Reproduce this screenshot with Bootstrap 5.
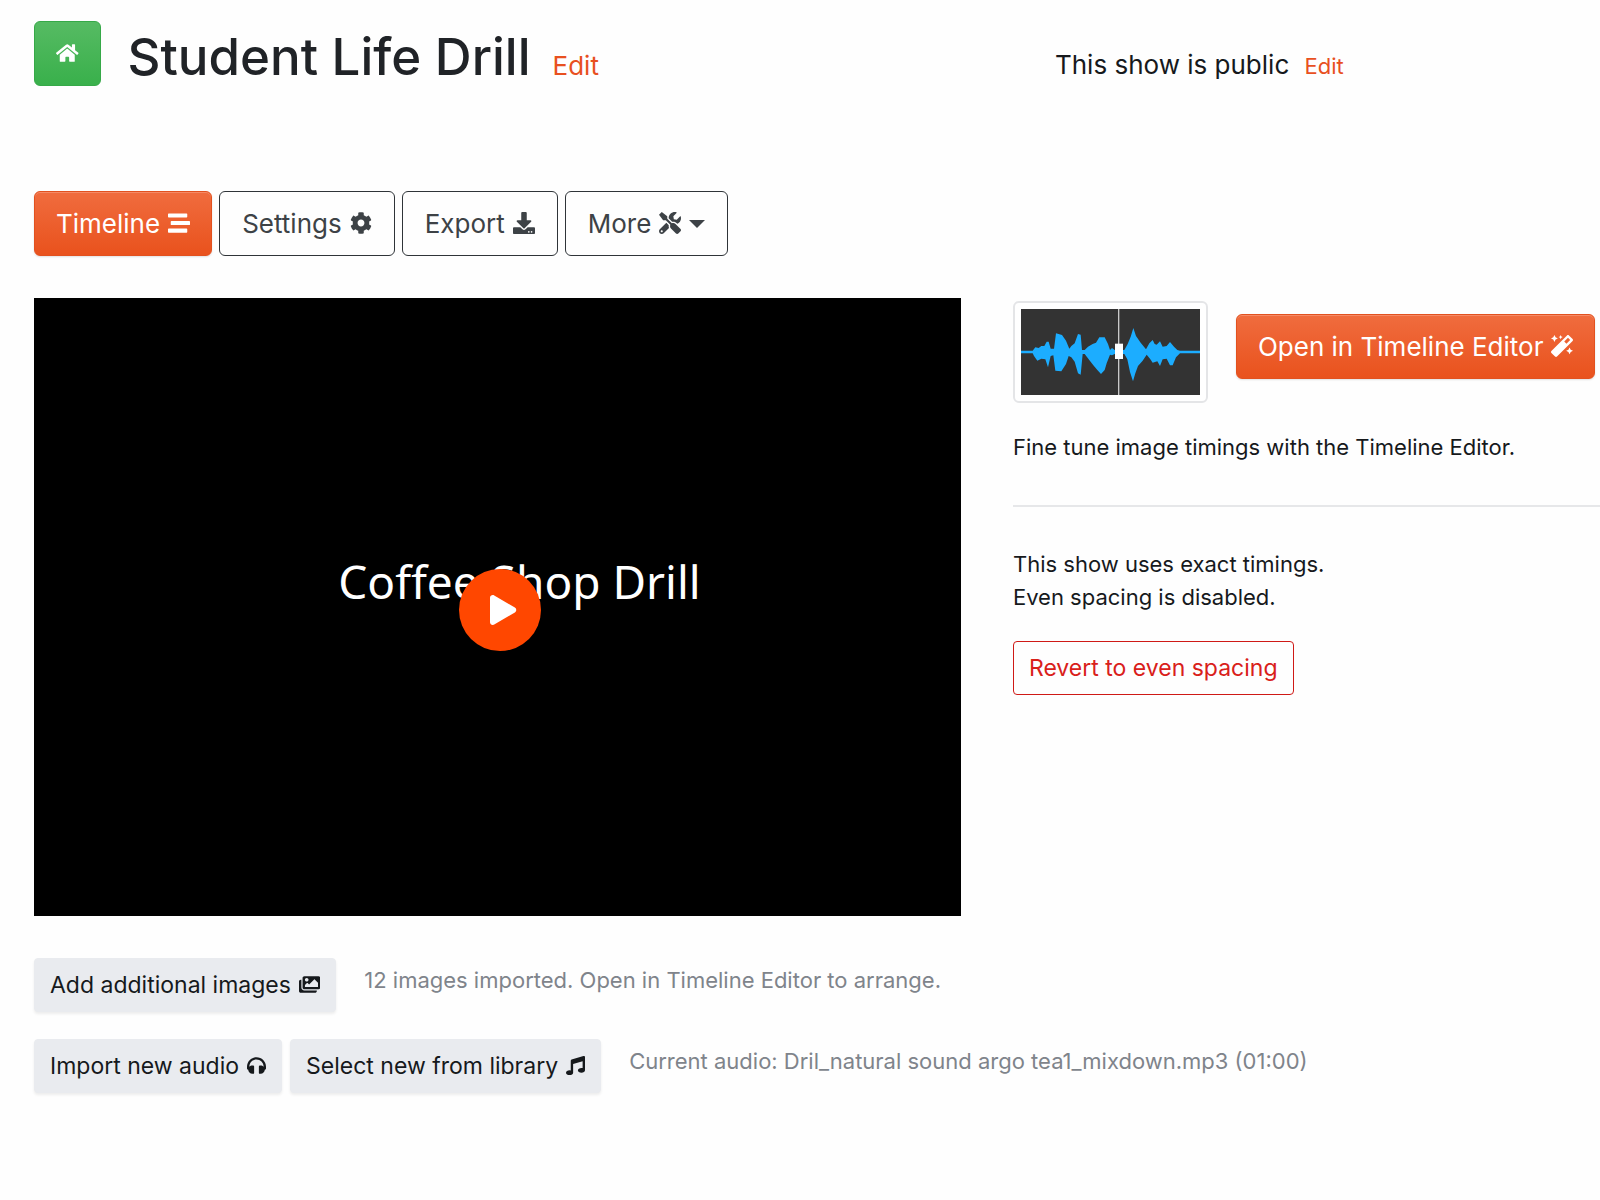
<!DOCTYPE html>
<html lang="en">
<head>
<meta charset="utf-8">
<meta name="viewport" content="width=device-width, initial-scale=1">
<title>Student Life Drill</title>
<link rel="stylesheet" href="https://cdn.jsdelivr.net/npm/bootstrap@5.3.0/dist/css/bootstrap.min.css">
<style>
  body { font-family: Inter, "Liberation Sans", sans-serif; font-size: 22px; line-height: 33px; color: #16191c; background: #fefefe; }
  a { color: #e8501f; text-decoration: none; }
  .ico { height: 22px; width: auto; fill: currentColor; flex: none; }
  .page { padding: 21px 0 40px 34px; }
  .split { display: grid; grid-template-columns: minmax(0, 30fr) minmax(0, 19fr); column-gap: 52px; }
  .btn { white-space: nowrap; display: inline-flex; align-items: center; }
  .btn-big { font-size: 26px; line-height: 39px; padding: 12px 21px; border-radius: 6px; gap: 8px; min-height: 65px; }
  .btn-big .ico { margin-bottom: 2px; }
  .btn-small { font-size: 23px; line-height: 36px; padding: 8px 15px; border-radius: 4px; gap: 8px; }
  .btn-small .ico { height: 19px; }
  .btn-fire, .btn-fire:hover { color: #fff; border-color: #e2511f; background: linear-gradient(#f06c3e, #e9521d); box-shadow: inset 0 1px 0 #f58a66, 0 1px 2px rgba(0,0,0,.12); }
  .btn-line, .btn-line:hover { color: #3d4246; border-color: #2f3438; padding: 12px 22px; }
  .btn-home, .btn-home:hover { color: #fff; border-color: #36a948; background: linear-gradient(#56bb63, #39b04b); }
  .btn-home .ico { height: 20px; }
  .btn-soft, .btn-soft:hover { color: #16191c; border-color: #e9ebef; background: #e9ebef; box-shadow: 0 2px 3px rgba(0,0,0,.07); }
  .btn-revert, .btn-revert:hover { color: #d9201a; border-color: #cf1a16; }
  .show-title { font-size: 51px; line-height: 65px; font-weight: 500; color: #202327; }
  .title-group { padding: 3px 0 0 27px; gap: 22px; }
  .title-edit { font-size: 26px; }
  .visibility { font-size: 26px; padding: 27px 0 0 42px; }
  .visibility a { font-size: 22px; margin-left: 8px; }
  .toolbar { margin-top: 102px; gap: 7px; }
  .toolbar .dropdown-toggle::after { margin-left: 0; border-top-width: 8px; border-left-width: 8px; border-right-width: 8px; }
  .workspace { margin-top: 42px; }
  .player { aspect-ratio: 3 / 2; background: #000; color: #fff; }
  .slide-text { font-family: "Noto Sans", sans-serif; font-size: 46px; line-height: 64px; padding: 0 0 52px 44px; }
  .play-btn { width: 82px; height: 82px; background: #ff4700; color: #fff; top: 50%; left: 50%; margin: 3px 0 0 3px; }
  .play-btn .ico { height: 30px; margin-left: 6px; }
  .wave { padding: 6px; border: 2px solid #e4e5e7; border-radius: 6px; background: #fff; width: 195px; }
  .wave svg { display: block; width: 100%; }
  .side { padding-top: 3px; }
  .open-editor { margin: 13px 0 0 28px; }
  .rule { height: 2px; background: #e6e7e9; margin: 41px 0; }
  .after-note { margin-bottom: 27px; }
  .media-row { margin-bottom: 27px; }
  .hint { color: #7f848b; padding: 6px 0 0 28px; }
</style>
</head>
<body>
<div class="page">
  <header class="split align-items-start">
    <div class="d-flex align-items-start">
      <a class="btn btn-home btn-big" href="#" aria-label="Home"><svg class="ico" viewBox="0 0 576 512"><path d="M280.37 148.26L96 300.11V464a16 16 0 0 0 16 16l112.06-.29a16 16 0 0 0 15.92-16V368a16 16 0 0 1 16-16h64a16 16 0 0 1 16 16v95.64a16 16 0 0 0 16 16.05L464 480a16 16 0 0 0 16-16V300L295.67 148.26a12.19 12.19 0 0 0-15.3 0zM571.6 251.47L488 182.56V44.05a12 12 0 0 0-12-12h-56a12 12 0 0 0-12 12v72.61L318.47 43a48 48 0 0 0-61 0L4.34 251.47a12 12 0 0 0-1.6 16.9l25.5 31A12 12 0 0 0 45.15 301l235.22-193.74a12.19 12.19 0 0 1 15.3 0L530.9 301a12 12 0 0 0 16.9-1.6l25.5-31a12 12 0 0 0-1.7-16.93z"/></svg></a>
      <div class="title-group d-flex align-items-baseline">
        <h1 class="show-title mb-0">Student Life Drill</h1>
        <a class="title-edit" href="#">Edit</a>
      </div>
    </div>
    <div class="visibility">This show is public <a href="#">Edit</a></div>
  </header>

  <nav class="toolbar d-flex flex-wrap" aria-label="Show sections">
    <button type="button" class="btn btn-fire btn-big">Timeline <svg class="ico" viewBox="0 0 512 512"><path d="M16 128h416c8.84 0 16-7.16 16-16V48c0-8.84-7.16-16-16-16H16C7.16 32 0 39.16 0 48v64c0 8.84 7.16 16 16 16zm480 80H80c-8.84 0-16 7.16-16 16v64c0 8.84 7.16 16 16 16h416c8.84 0 16-7.16 16-16v-64c0-8.84-7.16-16-16-16zm-64 176H16c-8.84 0-16 7.16-16 16v64c0 8.84 7.16 16 16 16h416c8.84 0 16-7.16 16-16v-64c0-8.84-7.16-16-16-16z"/></svg></button>
    <button type="button" class="btn btn-big btn-line">Settings <svg class="ico" viewBox="0 0 512 512"><path d="M487.4 315.7l-42.6-24.6c4.3-23.2 4.3-47 0-70.2l42.6-24.6c4.9-2.8 7.1-8.6 5.5-14-11.1-35.6-30-67.8-54.7-94.6-3.8-4.1-10-5.1-14.8-2.3L380.8 110c-17.9-15.4-38.5-27.3-60.8-35.1V25.8c0-5.6-3.9-10.5-9.4-11.7-36.7-8.2-74.3-7.8-109.2 0-5.5 1.2-9.4 6.1-9.4 11.7V75c-22.2 7.9-42.8 19.8-60.8 35.1L88.7 85.5c-4.9-2.8-11-1.9-14.8 2.3-24.7 26.7-43.6 58.9-54.7 94.6-1.7 5.4.6 11.2 5.5 14L67.3 221c-4.3 23.2-4.3 47 0 70.2l-42.6 24.6c-4.9 2.8-7.1 8.6-5.5 14 11.1 35.6 30 67.8 54.7 94.6 3.8 4.1 10 5.1 14.8 2.3l42.6-24.6c17.9 15.4 38.5 27.3 60.8 35.1v49.2c0 5.6 3.9 10.5 9.4 11.7 36.7 8.2 74.3 7.8 109.2 0 5.5-1.2 9.4-6.1 9.4-11.7v-49.2c22.2-7.9 42.8-19.8 60.8-35.1l42.6 24.6c4.9 2.8 11 1.9 14.8-2.3 24.7-26.7 43.6-58.9 54.7-94.6 1.5-5.5-.7-11.3-5.6-14.1zM256 336c-44.1 0-80-35.9-80-80s35.9-80 80-80 80 35.9 80 80-35.9 80-80 80z"/></svg></button>
    <button type="button" class="btn btn-big btn-line">Export <svg class="ico" viewBox="0 0 512 512"><path d="M216 0h80c13.3 0 24 10.7 24 24v168h87.7c17.8 0 26.7 21.5 14.1 34.1L269.7 378.3c-7.5 7.5-19.8 7.5-27.3 0L90.1 226.1c-12.6-12.6-3.7-34.1 14.1-34.1H192V24c0-13.3 10.7-24 24-24zm296 376v112c0 13.3-10.7 24-24 24H24c-13.3 0-24-10.7-24-24V376c0-13.3 10.7-24 24-24h146.7l49 49c20.1 20.1 52.5 20.1 72.6 0l49-49H488c13.3 0 24 10.7 24 24zm-124 88c0-11-9-20-20-20s-20 9-20 20 9 20 20 20 20-9 20-20zm64 0c0-11-9-20-20-20s-20 9-20 20 9 20 20 20 20-9 20-20z"/></svg></button>
    <button type="button" class="btn btn-big btn-line dropdown-toggle" data-bs-toggle="dropdown" aria-expanded="false">More <svg class="ico" viewBox="0 0 512 512"><path d="M501.1 395.7L384 278.6c-23.1-23.1-57.6-27.6-85.4-13.9L192 158.1V96L64 0 0 64l96 128h62.1l106.6 106.6c-13.6 27.8-9.2 62.3 13.9 85.4l117.1 117.1c14.6 14.6 38.2 14.6 52.7 0l52.7-52.7c14.5-14.6 14.5-38.2 0-52.7zM331.7 225c28.3 0 54.9 11 74.9 31l19.4 19.4c15.8-6.9 30.8-16.5 43.8-29.5 37.1-37.1 49.7-89.3 37.9-136.7-2.2-9-13.5-12.1-20.1-5.5l-74.4 74.4-67.9-11.3L334 98.9l74.4-74.4c6.6-6.6 3.4-17.9-5.7-20.2-47.4-11.7-99.6.9-136.6 37.9-28.5 28.5-41.9 66.1-41.2 103.6l82.1 82.1c8.1-1.9 16.5-2.9 24.7-2.9zm-103.9 82l-56.7-56.7L18.7 402.8c-25 25-25 65.5 0 90.5s65.5 25 90.5 0l123.6-123.6c-7.6-19.9-9.9-41.6-5-62.7zM64 472c-13.2 0-24-10.8-24-24 0-13.3 10.7-24 24-24s24 10.7 24 24c0 13.2-10.7 24-24 24z"/></svg></button>
  </nav>

  <main class="workspace">
    <div class="split">
      <section class="player position-relative d-flex align-items-center justify-content-center">
        <div class="slide-text">Coffee Shop Drill</div>
        <button type="button" class="play-btn btn rounded-circle border-0 p-0 justify-content-center position-absolute translate-middle" aria-label="Play"><svg class="ico" viewBox="0 0 448 512"><path d="M424.4 214.7L72.4 6.6C43.8-10.3 0 6.1 0 47.9V464c0 37.5 40.7 60.1 72.4 41.3l352-208c31.4-18.5 31.5-64.1 0-82.6z"/></svg></button>
      </section>
      <aside class="side">
        <div class="d-flex align-items-start">
          <div class="wave flex-shrink-0">
            <svg viewBox="0 0 537 258" role="img" aria-label="Audio waveform">
              <path fill="#333" d="M0 0h537v258H0z"/>
              <path fill="#1cadff" transform="translate(-15 33)" d="M15 92H50L58 82 68 84 76 78 85 78 92 65 98 65 104 86 114 86 120 40 138 45 150 62 160 86 166 78 176 70 186 42 194 44 198 90 206 90 216 80 230 72 240 68 250 52 266 52 276 72 282 90 288 84 296 90 325 90 335 72 344 50 352 24 360 48 374 68 390 88 400 70 410 60 416 72 422 74 432 64 440 80 452 78 462 66 474 80 484 90 492 92 552 92V100H492L480 112 470 136 462 136 452 116 440 118 432 138 424 124 410 128 402 116 392 104 380 122 366 138 358 160 351 184 342 156 334 118 325 102 296 102 288 106 282 104 272 130 266 150 255 162 244 150 232 136 218 118 206 102 200 102 194 164 186 160 176 125 166 112 158 108 150 132 136 154 118 152 112 106 104 108 96 142 88 118 76 116 64 122 54 108 50 100H15z"/>
              <path fill="#c9c9c9" d="M291 0h4v258h-4z"/>
              <path fill="#fff" d="M282 104h24v46h-24z"/>
            </svg>
          </div>
          <button type="button" class="btn btn-fire btn-big open-editor">Open in Timeline Editor <svg class="ico" viewBox="0 0 512 512"><path d="M224 96l16-32 32-16-32-16-16-32-16 32-32 16 32 16 16 32zM80 160l26.66-53.33L160 80l-53.34-26.67L80 0 53.34 53.33 0 80l53.34 26.67L80 160zm352 128l-26.66 53.33L352 368l53.34 26.67L432 448l26.66-53.33L512 368l-53.34-26.67L432 288zm70.62-193.77L417.77 9.38C411.53 3.12 403.34 0 395.15 0c-8.19 0-16.38 3.12-22.63 9.38L9.38 372.52c-12.5 12.5-12.5 32.76 0 45.25l84.85 84.85c6.25 6.25 14.44 9.37 22.62 9.37 8.19 0 16.38-3.12 22.63-9.37l363.14-363.15c12.5-12.48 12.5-32.75 0-45.24zM359.45 203.46l-50.91-50.91 86.6-86.6 50.91 50.91-86.6 86.6z"/></svg></button>
        </div>
        <p class="mt-4 pt-1 mb-0">Fine tune image timings with the Timeline Editor.</p>
        <div class="rule" role="separator"></div>
        <p class="after-note">This show uses exact timings.<br>Even spacing is disabled.</p>
        <button type="button" class="btn btn-small btn-revert">Revert to even spacing</button>
      </aside>
    </div>

    <div class="d-flex workspace media-row">
      <button type="button" class="btn btn-small btn-soft">Add additional images <svg class="ico" viewBox="0 0 576 512"><path d="M480 416v16c0 26.51-21.49 48-48 48H48c-26.51 0-48-21.49-48-48V176c0-26.51 21.49-48 48-48h16v208c0 44.112 35.888 80 80 80h336zm96-80V80c0-26.51-21.49-48-48-48H144c-26.51 0-48 21.49-48 48v256c0 26.51 21.49 48 48 48h384c26.51 0 48-21.49 48-48zM256 128c0 26.51-21.49 48-48 48s-48-21.49-48-48 21.49-48 48-48 48 21.49 48 48zm-96 144l55.515-55.515c4.686-4.686 12.284-4.686 16.971 0L272 256l135.515-135.515c4.686-4.686 12.284-4.686 16.971 0L512 208v112H160v-48z"/></svg></button>
      <span class="hint">12 images imported. Open in Timeline Editor to arrange.</span>
    </div>
    <div class="d-flex">
      <button type="button" class="btn btn-small btn-soft me-2">Import new audio <svg class="ico" viewBox="0 0 512 512"><path d="M256 32C114.52 32 0 146.497 0 288v48a32 32 0 0 0 17.689 28.622l14.383 7.191C34.083 431.903 83.421 480 144 480h24c13.255 0 24-10.745 24-24V280c0-13.255-10.745-24-24-24h-24c-31.342 0-59.671 12.879-80 33.627V288c0-105.869 86.131-192 192-192s192 86.131 192 192v1.627C427.671 268.879 399.342 256 368 256h-24c-13.255 0-24 10.745-24 24v176c0 13.255 10.745 24 24 24h24c60.579 0 109.917-48.098 111.928-108.187l14.382-7.191A32 32 0 0 0 512 336v-48c0-141.479-114.496-256-256-256z"/></svg></button>
      <button type="button" class="btn btn-small btn-soft">Select new from library <svg class="ico" viewBox="0 0 512 512"><path d="M470.38 1.51L150.41 96A32 32 0 0 0 128 126.51v261.41A139 139 0 0 0 96 384c-53 0-96 28.66-96 64s43 64 96 64 96-28.66 96-64V214.32l256-75v184.61a138.4 138.4 0 0 0-32-3.93c-53 0-96 28.66-96 64s43 64 96 64 96-28.65 96-64V32a32 32 0 0 0-41.62-30.49z"/></svg></button>
      <span class="hint">Current audio: Dril_natural sound argo tea1_mixdown.mp3 (01:00)</span>
    </div>
  </main>
</div>
<script src="https://cdn.jsdelivr.net/npm/bootstrap@5.3.0/dist/js/bootstrap.bundle.min.js"></script>
</body>
</html>
